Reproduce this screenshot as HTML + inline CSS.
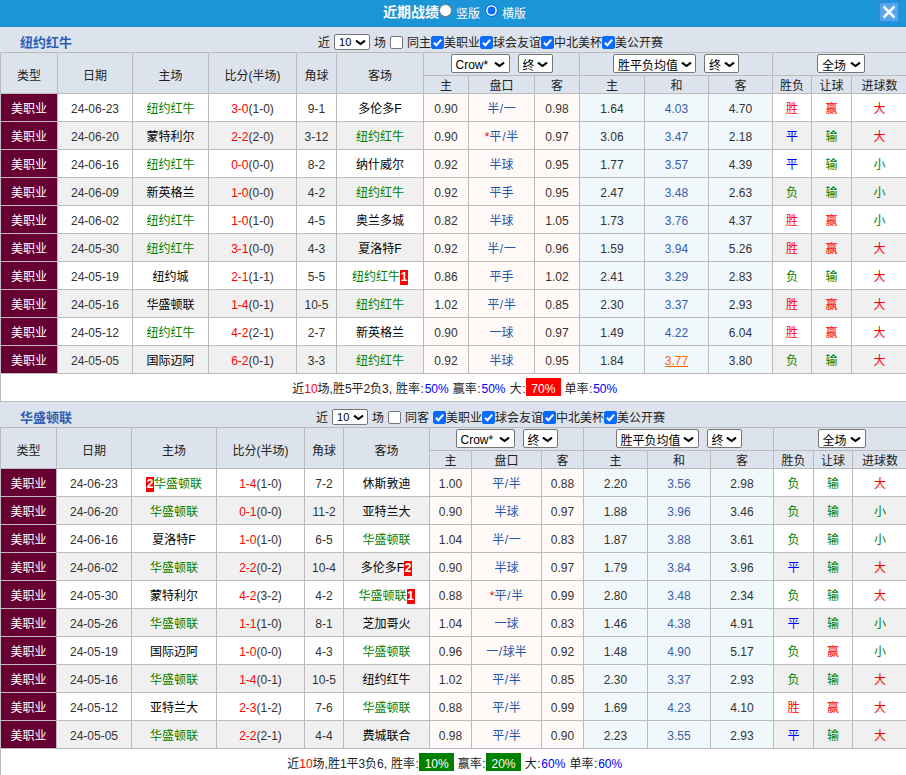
<!DOCTYPE html>
<html lang="zh-CN"><head><meta charset="utf-8"><title>近期战绩</title>
<style>
*{box-sizing:border-box}
html,body{margin:0;padding:0}
body{width:906px;height:775px;overflow:hidden;background:#fff;font-family:"Liberation Sans","Noto Sans CJK SC",sans-serif;font-size:12px;color:#333;position:relative}
.bar{height:27px;background:#1b95d5;border-bottom:1px solid #198ccb;position:relative;color:#fff}
.ttl{position:absolute;left:383px;top:3px;font-size:14px;font-weight:bold;line-height:18px;font-family:"Liberation Sans","Noto Sans CJK SC",sans-serif}
.rd{position:absolute;top:4px;width:13px;height:13px;border-radius:50%;background:#fff;border:1px solid #767676}
.rd.on{border:1px solid #0a6cff;background:#0a6cff;box-shadow:inset 0 0 0 1.6px #fff}
.rl{position:absolute;top:6px;line-height:16px}
.close{position:absolute;left:878px;top:1px;width:22px;height:22px;background:#56a6ea;border:2px solid #2b8ae0}
.close svg{position:absolute;left:0;top:0}
.sec{height:25px;background:#dce3ed;position:relative}
.nm{position:absolute;left:20px;top:7px;font-weight:bold;font-size:13px;color:#2e5fb5;line-height:18px;font-family:"Liberation Sans","Noto Sans CJK SC",sans-serif}
.flt{position:absolute;left:318px;top:7px;line-height:18px;height:18px;white-space:nowrap;color:#222}
.sel{display:inline-block;position:relative;height:19px;border:1px solid #767676;border-radius:2px;background:#fff;vertical-align:top;text-align:left;padding-left:4px;line-height:20px;color:#000;margin-top:0;white-space:nowrap;overflow:hidden}
.sel .ch{position:absolute;right:3.5px;top:5.5px}
.sel.m8{margin-left:8px}
.sel.cj{line-height:22px}
.sel.m2{margin-left:2px}
.sel.s0{height:16px;line-height:14px;font-size:11px;margin:0 4px 0 4px}
.sel.s0 .ch{top:4px}
.cb{display:inline-block;width:13px;height:13px;border:1px solid #767676;border-radius:2px;background:#fff;vertical-align:top;margin-top:2px;position:relative}
.cb svg{position:absolute;left:-1px;top:-1px}
.cb.on{background:#0a6cff;border-color:#0a6cff}
.cb.c0{margin-left:4px;margin-right:4px}
table.t{border-collapse:separate;border-spacing:1px;background:#bbb;table-layout:fixed;width:908px}
th{background:#dce3ed;font-weight:normal;color:#222;padding:0;text-align:center;line-height:14px}
tr.h1 th{height:22px;padding-top:6px}
tr.h1 th[colspan]{padding:1px 0 0 0;vertical-align:top;line-height:0;font-size:0}
tr.h1 th[colspan] .sel{font-size:12px}
tr.h2 th{height:17px;padding-top:3px}
td{height:27px;padding:4px 0 0 0;text-align:center;background:#fff;color:#000;line-height:15px}
tr.even td{background:#f0f0f0}
td.n{color:#333}
td.lg{background:#660033 !important;color:#fff}
td.p{background:#fffaf7 !important}
td.e{background:#f0f8fc !important}
.sl{display:inline-block;width:4.6px;text-align:center}
.r{color:#f00}.g{color:#008000}.b{color:#00f}
td.r{color:#f00}td.g{color:#008000}td.b{color:#00f}
td.bl{color:#1e56a8}
td.bl2{color:#3a5da8}
.o{color:#f60;text-decoration:underline}
.card{display:inline-block;background:#f00;color:#fff;font-weight:bold;width:8px;height:15px;line-height:15px;text-align:center;vertical-align:top;margin-top:0}
td.sum{height:27px;text-align:left;background:#fff;color:#222;padding:0;white-space:nowrap;line-height:0;font-size:0}
.sw{display:block;height:27px;white-space:nowrap}
.k{display:inline-block;text-align:center;font-size:12px;line-height:22px;height:18px;vertical-align:top;margin-top:4px;white-space:pre;overflow:visible}
.k.bgR{background:#f00;color:#fff}
.k.bgG{background:#008000;color:#fff}

</style></head><body>
<div class="bar"><span class="ttl">近期战绩</span><span class="rd" style="left:439px"></span><span class="rl" style="left:456px">竖版</span><span class="rd on" style="left:485px"></span><span class="rl" style="left:502px">横版</span>
<span class="close"><svg width="18" height="18" viewBox="0 0 18 18"><path d="M3.5 3.5 L14.5 14.5 M14.5 3.5 L3.5 14.5" stroke="#fff" stroke-width="2.5" fill="none"/></svg></span></div>
<div class="sec"><span class="nm">纽约红牛</span><span class="flt" style="left:318px">近<span class="sel s0" style="width:36px">10<svg class="ch" width="11" height="8" viewBox="0 0 11 8"><path d="M1 1.6 L5.5 5 L10 1.6" stroke="#000" stroke-width="2.1" fill="none"/></svg></span>场<span class="cb c0"></span>同主<span class="cb on" style="margin-left:0px"><svg width="13" height="13" viewBox="0 0 13 13"><path d="M2.9 6.7 L5.4 9.2 L10.2 3.6" stroke="#fff" stroke-width="2" fill="none"/></svg></span>美职业<span class="cb on"><svg width="13" height="13" viewBox="0 0 13 13"><path d="M2.9 6.7 L5.4 9.2 L10.2 3.6" stroke="#fff" stroke-width="2" fill="none"/></svg></span>球会友谊<span class="cb on"><svg width="13" height="13" viewBox="0 0 13 13"><path d="M2.9 6.7 L5.4 9.2 L10.2 3.6" stroke="#fff" stroke-width="2" fill="none"/></svg></span>中北美杯<span class="cb on"><svg width="13" height="13" viewBox="0 0 13 13"><path d="M2.9 6.7 L5.4 9.2 L10.2 3.6" stroke="#fff" stroke-width="2" fill="none"/></svg></span>美公开赛</span></div>
<table class="t" cellspacing="0" cellpadding="0"><colgroup>
<col style="width:56px">
<col style="width:74px">
<col style="width:75px">
<col style="width:87px">
<col style="width:39px">
<col style="width:86px">
<col style="width:44px">
<col style="width:65px">
<col style="width:44px">
<col style="width:64px">
<col style="width:63px">
<col style="width:63px">
<col style="width:38px">
<col style="width:39px">
<col style="width:55px">
</colgroup>
<tr class="h1"><th rowspan="2">类型</th><th rowspan="2">日期</th><th rowspan="2">主场</th><th rowspan="2">比分(半场)</th><th rowspan="2">角球</th><th rowspan="2">客场</th><th colspan="3"><span class="sel " style="width:59px">Crow*<svg class="ch" width="11" height="8" viewBox="0 0 11 8"><path d="M1 1.6 L5.5 5 L10 1.6" stroke="#000" stroke-width="2.1" fill="none"/></svg></span><span class="sel m8 cj" style="width:35px">终<svg class="ch" width="11" height="8" viewBox="0 0 11 8"><path d="M1 1.6 L5.5 5 L10 1.6" stroke="#000" stroke-width="2.1" fill="none"/></svg></span></th><th colspan="3"><span class="sel cj" style="width:83px">胜平负均值<svg class="ch" width="11" height="8" viewBox="0 0 11 8"><path d="M1 1.6 L5.5 5 L10 1.6" stroke="#000" stroke-width="2.1" fill="none"/></svg></span><span class="sel m8 cj" style="width:35px">终<svg class="ch" width="11" height="8" viewBox="0 0 11 8"><path d="M1 1.6 L5.5 5 L10 1.6" stroke="#000" stroke-width="2.1" fill="none"/></svg></span></th><th colspan="3"><span class="sel m2 cj" style="width:48px">全场<svg class="ch" width="11" height="8" viewBox="0 0 11 8"><path d="M1 1.6 L5.5 5 L10 1.6" stroke="#000" stroke-width="2.1" fill="none"/></svg></span></th></tr>
<tr class="h2"><th>主</th><th>盘口</th><th>客</th><th>主</th><th>和</th><th>客</th><th>胜负</th><th>让球</th><th>进球数</th></tr>
<tr class="odd"><td class="lg">美职业</td><td class="n">24-06-23</td><td><span class="g">纽约红牛</span></td><td class="n"><span class="r">3-0</span>(1-0)</td><td class="n">9-1</td><td>多伦多F</td><td class="p n">0.90</td><td class="p bl">半<span class="sl">/</span>一</td><td class="p n">0.98</td><td class="e n">1.64</td><td class="e bl2">4.03</td><td class="e n">4.70</td><td class="r">胜</td><td class="r">赢</td><td class="r">大</td></tr>
<tr class="even"><td class="lg">美职业</td><td class="n">24-06-20</td><td>蒙特利尔</td><td class="n"><span class="r">2-2</span>(2-0)</td><td class="n">3-12</td><td><span class="g">纽约红牛</span></td><td class="p n">0.90</td><td class="p bl"><span class="r">*</span>平<span class="sl">/</span>半</td><td class="p n">0.97</td><td class="e n">3.06</td><td class="e bl2">3.47</td><td class="e n">2.18</td><td class="b">平</td><td class="g">输</td><td class="r">大</td></tr>
<tr class="odd"><td class="lg">美职业</td><td class="n">24-06-16</td><td><span class="g">纽约红牛</span></td><td class="n"><span class="r">0-0</span>(0-0)</td><td class="n">8-2</td><td>纳什威尔</td><td class="p n">0.92</td><td class="p bl">半球</td><td class="p n">0.95</td><td class="e n">1.77</td><td class="e bl2">3.57</td><td class="e n">4.39</td><td class="b">平</td><td class="g">输</td><td class="g">小</td></tr>
<tr class="even"><td class="lg">美职业</td><td class="n">24-06-09</td><td>新英格兰</td><td class="n"><span class="r">1-0</span>(0-0)</td><td class="n">4-2</td><td><span class="g">纽约红牛</span></td><td class="p n">0.92</td><td class="p bl">平手</td><td class="p n">0.95</td><td class="e n">2.47</td><td class="e bl2">3.48</td><td class="e n">2.63</td><td class="g">负</td><td class="g">输</td><td class="g">小</td></tr>
<tr class="odd"><td class="lg">美职业</td><td class="n">24-06-02</td><td><span class="g">纽约红牛</span></td><td class="n"><span class="r">1-0</span>(1-0)</td><td class="n">4-5</td><td>奥兰多城</td><td class="p n">0.82</td><td class="p bl">半球</td><td class="p n">1.05</td><td class="e n">1.73</td><td class="e bl2">3.76</td><td class="e n">4.37</td><td class="r">胜</td><td class="r">赢</td><td class="g">小</td></tr>
<tr class="even"><td class="lg">美职业</td><td class="n">24-05-30</td><td><span class="g">纽约红牛</span></td><td class="n"><span class="r">3-1</span>(0-0)</td><td class="n">4-3</td><td>夏洛特F</td><td class="p n">0.92</td><td class="p bl">半<span class="sl">/</span>一</td><td class="p n">0.96</td><td class="e n">1.59</td><td class="e bl2">3.94</td><td class="e n">5.26</td><td class="r">胜</td><td class="r">赢</td><td class="r">大</td></tr>
<tr class="odd"><td class="lg">美职业</td><td class="n">24-05-19</td><td>纽约城</td><td class="n"><span class="r">2-1</span>(1-1)</td><td class="n">5-5</td><td><span class="g">纽约红牛</span><span class="card">1</span></td><td class="p n">0.86</td><td class="p bl">平手</td><td class="p n">1.02</td><td class="e n">2.41</td><td class="e bl2">3.29</td><td class="e n">2.83</td><td class="g">负</td><td class="g">输</td><td class="r">大</td></tr>
<tr class="even"><td class="lg">美职业</td><td class="n">24-05-16</td><td>华盛顿联</td><td class="n"><span class="r">1-4</span>(0-1)</td><td class="n">10-5</td><td><span class="g">纽约红牛</span></td><td class="p n">1.02</td><td class="p bl">平<span class="sl">/</span>半</td><td class="p n">0.85</td><td class="e n">2.30</td><td class="e bl2">3.37</td><td class="e n">2.93</td><td class="r">胜</td><td class="r">赢</td><td class="r">大</td></tr>
<tr class="odd"><td class="lg">美职业</td><td class="n">24-05-12</td><td><span class="g">纽约红牛</span></td><td class="n"><span class="r">4-2</span>(2-1)</td><td class="n">2-7</td><td>新英格兰</td><td class="p n">0.90</td><td class="p bl">一球</td><td class="p n">0.97</td><td class="e n">1.49</td><td class="e bl2">4.22</td><td class="e n">6.04</td><td class="r">胜</td><td class="r">赢</td><td class="r">大</td></tr>
<tr class="even"><td class="lg">美职业</td><td class="n">24-05-05</td><td>国际迈阿</td><td class="n"><span class="r">6-2</span>(0-1)</td><td class="n">3-3</td><td><span class="g">纽约红牛</span></td><td class="p n">0.92</td><td class="p bl">半球</td><td class="p n">0.95</td><td class="e n">1.84</td><td class="e bl2"><span class="o">3.77</span></td><td class="e n">3.80</td><td class="g">负</td><td class="g">输</td><td class="r">大</td></tr>
<tr><td colspan="15" class="sum"><span class="sw" style="padding-left:291.3px"><span class="k " style="width:12px">近</span><span class="k r" style="width:13.1px">10</span><span class="k " style="width:12px">场</span><span class="k " style="width:3.6px">,</span><span class="k " style="width:12px">胜</span><span class="k " style="width:6.55px">5</span><span class="k " style="width:12px">平</span><span class="k " style="width:6.55px">2</span><span class="k " style="width:12px">负</span><span class="k " style="width:6.55px">3</span><span class="k " style="width:3.6px">,</span><span class="k" style="width:3.75px"> </span><span class="k " style="width:24px">胜率</span><span class="k " style="width:4.3px">:</span><span class="k b" style="width:24.8px">50%</span><span class="k" style="width:3.75px"> </span><span class="k " style="width:24px">赢率</span><span class="k " style="width:4.3px">:</span><span class="k b" style="width:24.8px">50%</span><span class="k" style="width:3.75px"> </span><span class="k " style="width:12px">大</span><span class="k " style="width:4.3px">:</span><span class="k bgR" style="width:34.8px">70%</span><span class="k" style="width:3.75px"> </span><span class="k " style="width:24px">单率</span><span class="k " style="width:4.3px">:</span><span class="k b" style="width:24.8px">50%</span></span></td></tr>
</table>
<div class="sec"><span class="nm">华盛顿联</span><span class="flt" style="left:316px">近<span class="sel s0" style="width:36px">10<svg class="ch" width="11" height="8" viewBox="0 0 11 8"><path d="M1 1.6 L5.5 5 L10 1.6" stroke="#000" stroke-width="2.1" fill="none"/></svg></span>场<span class="cb c0"></span>同客<span class="cb on" style="margin-left:4px"><svg width="13" height="13" viewBox="0 0 13 13"><path d="M2.9 6.7 L5.4 9.2 L10.2 3.6" stroke="#fff" stroke-width="2" fill="none"/></svg></span>美职业<span class="cb on"><svg width="13" height="13" viewBox="0 0 13 13"><path d="M2.9 6.7 L5.4 9.2 L10.2 3.6" stroke="#fff" stroke-width="2" fill="none"/></svg></span>球会友谊<span class="cb on"><svg width="13" height="13" viewBox="0 0 13 13"><path d="M2.9 6.7 L5.4 9.2 L10.2 3.6" stroke="#fff" stroke-width="2" fill="none"/></svg></span>中北美杯<span class="cb on"><svg width="13" height="13" viewBox="0 0 13 13"><path d="M2.9 6.7 L5.4 9.2 L10.2 3.6" stroke="#fff" stroke-width="2" fill="none"/></svg></span>美公开赛</span></div>
<table class="t" cellspacing="0" cellpadding="0"><colgroup>
<col style="width:55px">
<col style="width:74px">
<col style="width:84px">
<col style="width:87px">
<col style="width:38px">
<col style="width:85px">
<col style="width:41px">
<col style="width:69px">
<col style="width:41px">
<col style="width:63px">
<col style="width:62px">
<col style="width:62px">
<col style="width:39px">
<col style="width:38px">
<col style="width:54px">
</colgroup>
<tr class="h1"><th rowspan="2">类型</th><th rowspan="2">日期</th><th rowspan="2">主场</th><th rowspan="2">比分(半场)</th><th rowspan="2">角球</th><th rowspan="2">客场</th><th colspan="3"><span class="sel " style="width:59px">Crow*<svg class="ch" width="11" height="8" viewBox="0 0 11 8"><path d="M1 1.6 L5.5 5 L10 1.6" stroke="#000" stroke-width="2.1" fill="none"/></svg></span><span class="sel m8 cj" style="width:35px">终<svg class="ch" width="11" height="8" viewBox="0 0 11 8"><path d="M1 1.6 L5.5 5 L10 1.6" stroke="#000" stroke-width="2.1" fill="none"/></svg></span></th><th colspan="3"><span class="sel cj" style="width:83px">胜平负均值<svg class="ch" width="11" height="8" viewBox="0 0 11 8"><path d="M1 1.6 L5.5 5 L10 1.6" stroke="#000" stroke-width="2.1" fill="none"/></svg></span><span class="sel m8 cj" style="width:35px">终<svg class="ch" width="11" height="8" viewBox="0 0 11 8"><path d="M1 1.6 L5.5 5 L10 1.6" stroke="#000" stroke-width="2.1" fill="none"/></svg></span></th><th colspan="3"><span class="sel m2 cj" style="width:48px">全场<svg class="ch" width="11" height="8" viewBox="0 0 11 8"><path d="M1 1.6 L5.5 5 L10 1.6" stroke="#000" stroke-width="2.1" fill="none"/></svg></span></th></tr>
<tr class="h2"><th>主</th><th>盘口</th><th>客</th><th>主</th><th>和</th><th>客</th><th>胜负</th><th>让球</th><th>进球数</th></tr>
<tr class="odd"><td class="lg">美职业</td><td class="n">24-06-23</td><td><span class="card">2</span><span class="g">华盛顿联</span></td><td class="n"><span class="r">1-4</span>(1-0)</td><td class="n">7-2</td><td>休斯敦迪</td><td class="p n">1.00</td><td class="p bl">平<span class="sl">/</span>半</td><td class="p n">0.88</td><td class="e n">2.20</td><td class="e bl2">3.56</td><td class="e n">2.98</td><td class="g">负</td><td class="g">输</td><td class="r">大</td></tr>
<tr class="even"><td class="lg">美职业</td><td class="n">24-06-20</td><td><span class="g">华盛顿联</span></td><td class="n"><span class="r">0-1</span>(0-0)</td><td class="n">11-2</td><td>亚特兰大</td><td class="p n">0.90</td><td class="p bl">半球</td><td class="p n">0.97</td><td class="e n">1.88</td><td class="e bl2">3.96</td><td class="e n">3.46</td><td class="g">负</td><td class="g">输</td><td class="g">小</td></tr>
<tr class="odd"><td class="lg">美职业</td><td class="n">24-06-16</td><td>夏洛特F</td><td class="n"><span class="r">1-0</span>(1-0)</td><td class="n">6-5</td><td><span class="g">华盛顿联</span></td><td class="p n">1.04</td><td class="p bl">半<span class="sl">/</span>一</td><td class="p n">0.83</td><td class="e n">1.87</td><td class="e bl2">3.88</td><td class="e n">3.61</td><td class="g">负</td><td class="g">输</td><td class="g">小</td></tr>
<tr class="even"><td class="lg">美职业</td><td class="n">24-06-02</td><td><span class="g">华盛顿联</span></td><td class="n"><span class="r">2-2</span>(0-2)</td><td class="n">10-4</td><td>多伦多F<span class="card">2</span></td><td class="p n">0.90</td><td class="p bl">半球</td><td class="p n">0.97</td><td class="e n">1.79</td><td class="e bl2">3.84</td><td class="e n">3.96</td><td class="b">平</td><td class="g">输</td><td class="r">大</td></tr>
<tr class="odd"><td class="lg">美职业</td><td class="n">24-05-30</td><td>蒙特利尔</td><td class="n"><span class="r">4-2</span>(3-2)</td><td class="n">4-2</td><td><span class="g">华盛顿联</span><span class="card">1</span></td><td class="p n">0.88</td><td class="p bl"><span class="r">*</span>平<span class="sl">/</span>半</td><td class="p n">0.99</td><td class="e n">2.80</td><td class="e bl2">3.48</td><td class="e n">2.34</td><td class="g">负</td><td class="g">输</td><td class="r">大</td></tr>
<tr class="even"><td class="lg">美职业</td><td class="n">24-05-26</td><td><span class="g">华盛顿联</span></td><td class="n"><span class="r">1-1</span>(1-0)</td><td class="n">8-1</td><td>芝加哥火</td><td class="p n">1.04</td><td class="p bl">一球</td><td class="p n">0.83</td><td class="e n">1.46</td><td class="e bl2">4.38</td><td class="e n">4.91</td><td class="b">平</td><td class="g">输</td><td class="g">小</td></tr>
<tr class="odd"><td class="lg">美职业</td><td class="n">24-05-19</td><td>国际迈阿</td><td class="n"><span class="r">1-0</span>(0-0)</td><td class="n">4-3</td><td><span class="g">华盛顿联</span></td><td class="p n">0.96</td><td class="p bl">一<span class="sl">/</span>球半</td><td class="p n">0.92</td><td class="e n">1.48</td><td class="e bl2">4.90</td><td class="e n">5.17</td><td class="g">负</td><td class="r">赢</td><td class="g">小</td></tr>
<tr class="even"><td class="lg">美职业</td><td class="n">24-05-16</td><td><span class="g">华盛顿联</span></td><td class="n"><span class="r">1-4</span>(0-1)</td><td class="n">10-5</td><td>纽约红牛</td><td class="p n">1.02</td><td class="p bl">平<span class="sl">/</span>半</td><td class="p n">0.85</td><td class="e n">2.30</td><td class="e bl2">3.37</td><td class="e n">2.93</td><td class="g">负</td><td class="g">输</td><td class="r">大</td></tr>
<tr class="odd"><td class="lg">美职业</td><td class="n">24-05-12</td><td>亚特兰大</td><td class="n"><span class="r">2-3</span>(1-2)</td><td class="n">7-6</td><td><span class="g">华盛顿联</span></td><td class="p n">0.88</td><td class="p bl">平<span class="sl">/</span>半</td><td class="p n">0.99</td><td class="e n">1.69</td><td class="e bl2">4.23</td><td class="e n">4.10</td><td class="r">胜</td><td class="r">赢</td><td class="r">大</td></tr>
<tr class="even"><td class="lg">美职业</td><td class="n">24-05-05</td><td><span class="g">华盛顿联</span></td><td class="n"><span class="r">2-2</span>(2-1)</td><td class="n">4-4</td><td>费城联合</td><td class="p n">0.98</td><td class="p bl">平<span class="sl">/</span>半</td><td class="p n">0.90</td><td class="e n">2.23</td><td class="e bl2">3.55</td><td class="e n">2.93</td><td class="b">平</td><td class="g">输</td><td class="r">大</td></tr>
<tr><td colspan="15" class="sum"><span class="sw" style="padding-left:286.3px"><span class="k " style="width:12px">近</span><span class="k r" style="width:13.1px">10</span><span class="k " style="width:12px">场</span><span class="k " style="width:3.6px">,</span><span class="k " style="width:12px">胜</span><span class="k " style="width:6.55px">1</span><span class="k " style="width:12px">平</span><span class="k " style="width:6.55px">3</span><span class="k " style="width:12px">负</span><span class="k " style="width:6.55px">6</span><span class="k " style="width:3.6px">,</span><span class="k" style="width:3.75px"> </span><span class="k " style="width:24px">胜率</span><span class="k " style="width:4.3px">:</span><span class="k bgG" style="width:34.8px">10%</span><span class="k" style="width:3.75px"> </span><span class="k " style="width:24px">赢率</span><span class="k " style="width:4.3px">:</span><span class="k bgG" style="width:34.8px">20%</span><span class="k" style="width:3.75px"> </span><span class="k " style="width:12px">大</span><span class="k " style="width:4.3px">:</span><span class="k b" style="width:24.8px">60%</span><span class="k" style="width:3.75px"> </span><span class="k " style="width:24px">单率</span><span class="k " style="width:4.3px">:</span><span class="k b" style="width:24.8px">60%</span></span></td></tr>
</table>
</body></html>
